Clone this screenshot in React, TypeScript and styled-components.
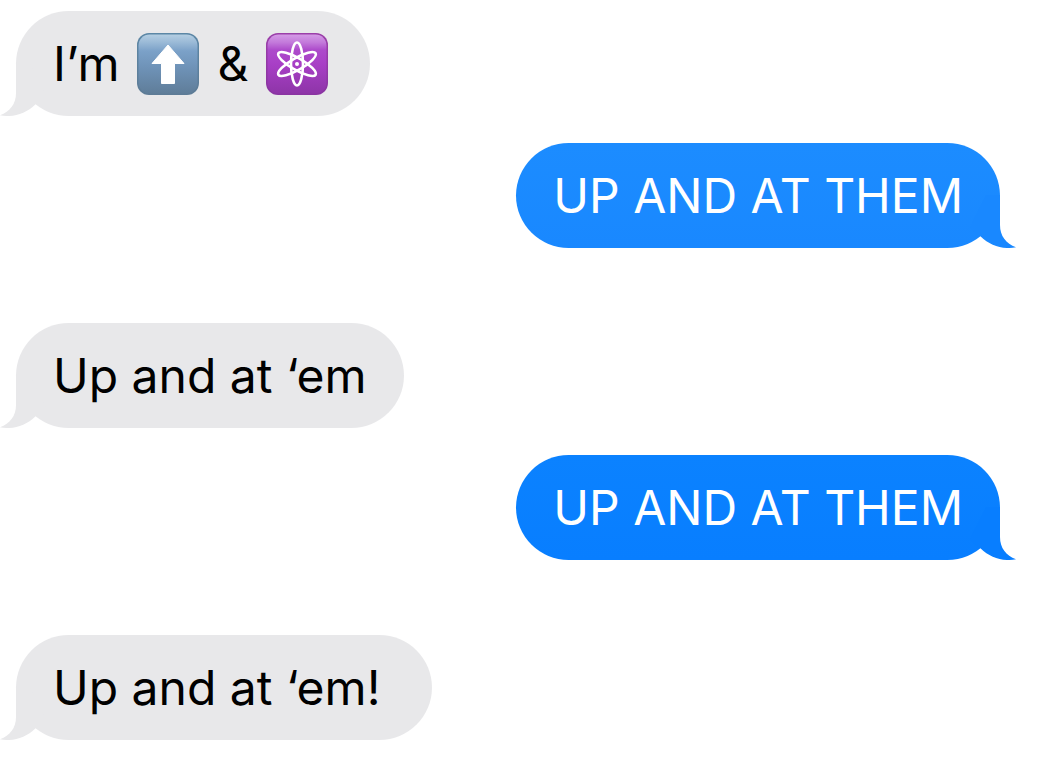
import React from "react";
import styled, { createGlobalStyle, css } from "styled-components";

type Side = "in" | "out";

const GlobalStyle = createGlobalStyle`
  body {
    margin: 0;
    background: #ffffff;
    font-family: Inter, "Liberation Sans", sans-serif;
  }
`;

const Thread = styled.ol`
  list-style: none;
  margin: 0;
  padding: 11px 48px 20px 16px;
  display: flex;
  flex-direction: column;
`;

const Row = styled.li<{ $side: Side }>`
  display: flex;
  justify-content: ${(p) => (p.$side === "out" ? "flex-end" : "flex-start")};
  margin-top: ${(p) => (p.$side === "out" ? 27 : 75)}px;

  &:first-child {
    margin-top: 0;
  }
`;

const Bubble = styled.div<{ $side: Side; $tone: string; $toneEnd: string; $endPad: number }>`
  position: relative;
  display: flex;
  align-items: center;
  min-height: 105px;
  box-sizing: border-box;
  padding: 1px ${(p) => p.$endPad}px 0 37px;
  border-radius: 53px;
  background: linear-gradient(${(p) => p.$tone}, ${(p) => p.$toneEnd});
  color: ${(p) => (p.$side === "out" ? "#ffffff" : "#000000")};
`;

const Text = styled.p`
  margin: 0;
  font-size: 48px;
  line-height: 60px;
  display: flex;
  align-items: center;
  gap: 18px;
`;

const TailShape = styled.svg<{ $side: Side }>`
  position: absolute;
  bottom: 0;
  width: 52px;
  height: 56px;
  ${(p) =>
    p.$side === "out"
      ? css`
          right: -16px;
          transform: scaleX(-1);
        `
      : css`
          left: -16px;
        `}
`;

const EmojiArt = styled.svg`
  width: 62px;
  height: 62px;
  flex: none;
`;

function Tail({ side, color }: { side: Side; color: string }) {
  return (
    <TailShape $side={side} viewBox="0 0 52 56" aria-hidden="true">
      <path d="M16 3V33C16 44 10 51.500 0 55.200C13 58 26 53.500 35.300 44.500L46 36L30 3Z" fill={color} />
    </TailShape>
  );
}

function UpArrow() {
  return (
    <EmojiArt viewBox="0 0 62 62" role="img" aria-label="up arrow">
      <defs>
        <linearGradient id="blueFace" x1="0" y1="0" x2="0" y2="1">
          <stop offset="0" stopColor="#b4cee2" />
          <stop offset="0.12" stopColor="#9dbcd8" />
          <stop offset="0.28" stopColor="#7ba1c8" />
          <stop offset="0.55" stopColor="#6f93b8" />
          <stop offset="1" stopColor="#5f7d99" />
        </linearGradient>
        <linearGradient id="blueRim" x1="0" y1="0" x2="0" y2="1">
          <stop offset="0" stopColor="#5c87a6" />
          <stop offset="1" stopColor="#5d7b96" />
        </linearGradient>
      </defs>
      <rect width="62" height="62" rx="12" fill="url(#blueRim)" />
      <rect x="1.500" y="1.500" width="59" height="59" rx="11" fill="url(#blueFace)" />
      <path
        d="M31 12L47 30.500H37.500V50.500H24.500V30.500H15Z"
        fill="#ffffff"
        stroke="#ffffff"
        strokeWidth="1"
        strokeLinejoin="round"
      />
    </EmojiArt>
  );
}

function Atom() {
  return (
    <EmojiArt viewBox="0 0 62 62" role="img" aria-label="atom symbol">
      <defs>
        <linearGradient id="purpleFace" x1="0" y1="0" x2="0" y2="1">
          <stop offset="0" stopColor="#d49be6" />
          <stop offset="0.14" stopColor="#c278da" />
          <stop offset="0.26" stopColor="#ad4bcb" />
          <stop offset="0.5" stopColor="#a83fc6" />
          <stop offset="1" stopColor="#8e35a8" />
        </linearGradient>
        <linearGradient id="purpleRim" x1="0" y1="0" x2="0" y2="1">
          <stop offset="0" stopColor="#9b3fa9" />
          <stop offset="1" stopColor="#8a34a2" />
        </linearGradient>
      </defs>
      <rect width="62" height="62" rx="12" fill="url(#purpleRim)" />
      <rect x="1.500" y="1.500" width="59" height="59" rx="11" fill="url(#purpleFace)" />
      <g fill="none" stroke="#ffffff" strokeWidth="2.600">
        <ellipse cx="31" cy="31" rx="6" ry="21.500" />
        <ellipse cx="31" cy="31" rx="6" ry="21.500" transform="rotate(60 31 31)" />
        <ellipse cx="31" cy="31" rx="6" ry="21.500" transform="rotate(-60 31 31)" />
      </g>
      <circle cx="31" cy="31" r="2" fill="#ffffff" />
    </EmojiArt>
  );
}

interface Message {
  side: Side;
  body: React.ReactNode;
  tone: string;
  toneEnd: string;
  endPad?: number;
}

const GREY = "#e8e8ea";

const messages: Message[] = [
  {
    side: "in",
    tone: GREY,
    toneEnd: GREY,
    endPad: 42,
    body: (
      <>
        <span>I’m</span>
        <UpArrow />
        <span>&amp;</span>
        <Atom />
      </>
    ),
  },
  { side: "out", tone: "#1c8cff", toneEnd: "#1988ff", body: "UP AND AT THEM" },
  { side: "in", tone: GREY, toneEnd: GREY, body: "Up and at ‘em" },
  { side: "out", tone: "#0b82ff", toneEnd: "#087eff", body: "UP AND AT THEM" },
  { side: "in", tone: GREY, toneEnd: GREY, body: "Up and at ‘em!", endPad: 52 },
];

export default function App() {
  return (
    <main>
      <GlobalStyle />
      <Thread>
        {messages.map((m, i) => (
          <Row key={i} $side={m.side}>
            <Bubble $side={m.side} $tone={m.tone} $toneEnd={m.toneEnd} $endPad={m.endPad ?? 37}>
              <Tail side={m.side} color={m.toneEnd} />
              <Text>{m.body}</Text>
            </Bubble>
          </Row>
        ))}
      </Thread>
    </main>
  );
}
